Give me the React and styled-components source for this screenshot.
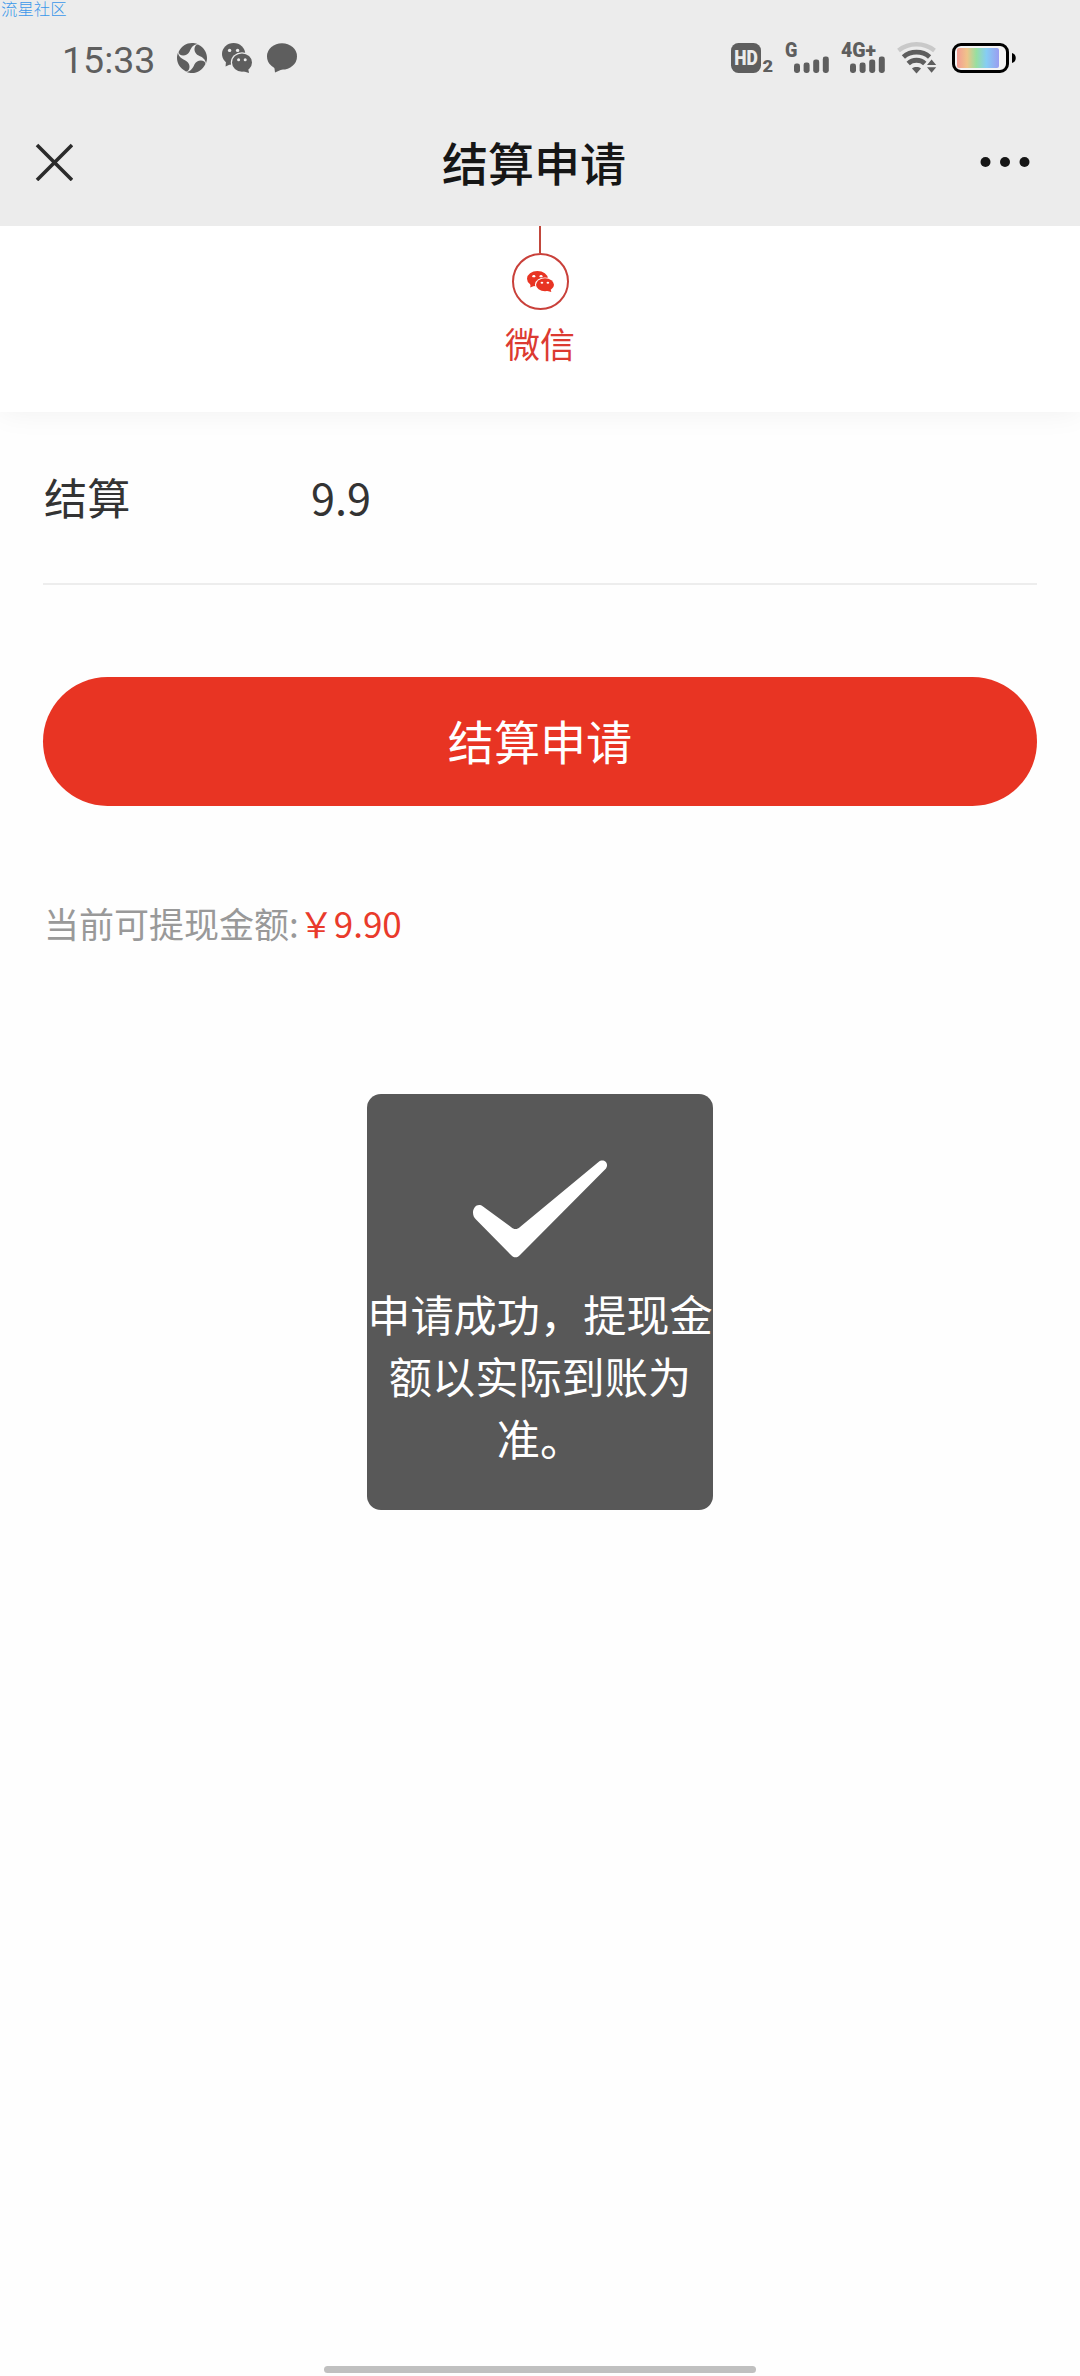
import React from "react";
import styled, { createGlobalStyle } from "styled-components";

const GlobalStyle = createGlobalStyle`
  * {
    box-sizing: border-box;
  }

  body {
    margin: 0;
    background: #fefefe;
    font-family: "Noto Sans CJK SC", "Noto Sans", sans-serif;
  }
`;

const Page = styled.div`
  display: flex;
  flex-direction: column;
  width: 1080px;
  height: 2376px;
  overflow: hidden;
`;

const Header = styled.header`
  display: flex;
  flex-direction: column;
  height: 226px;
  background: #ececec;
`;

const Watermark = styled.span`
  height: 16px;
  padding-left: 1px;
  color: #3a97ea;
  font-family: "Liberation Sans", "Noto Sans CJK SC", sans-serif;
  font-size: 16.4px;
  font-weight: 300;
  line-height: 18px;
`;

const StatusBar = styled.div`
  display: flex;
  align-items: center;
  justify-content: space-between;
  height: 84px;
  padding: 0 64px 0 62px;
`;

const StatusGroup = styled.div`
  display: flex;
  align-items: center;
  gap: ${(props) => props.$gap}px;
`;

const Clock = styled.span`
  width: 100px;
  padding-top: 4px;
  color: #5e5e5e;
  font-family: Roboto, sans-serif;
  font-size: 37.5px;
  line-height: 40px;
`;

const NavBar = styled.nav`
  display: grid;
  grid-template-columns: 200px 1fr 200px;
  align-items: center;
  height: 123px;
  padding: 0 50px 0 35px;
`;

const Title = styled.h1`
  margin: 0;
  padding: 0 0 2px 3px;
  color: #161616;
  font-size: 46px;
  font-weight: 500;
  line-height: 66px;
  text-align: center;
`;

const NavButton = styled.button`
  display: flex;
  justify-content: ${(props) => (props.$end ? "flex-end" : "flex-start")};
  padding: 0;
  border: 0;
  background: none;
`;

const Method = styled.section`
  display: flex;
  flex-direction: column;
  align-items: center;
  height: 186px;
  background: #fff;
  box-shadow: 0 0 29px rgba(0, 0, 0, 0.06);
  clip-path: inset(0 0 -60px 0);
`;

const Connector = styled.div`
  width: 2px;
  height: 27px;
  background: #c1473c;
`;

const MethodIcon = styled.div`
  display: flex;
  align-items: center;
  justify-content: center;
  width: 57px;
  height: 57px;
  border: 2px solid #c9403a;
  border-radius: 50%;
`;

const MethodName = styled.span`
  margin-top: 8px;
  color: #dc3a31;
  font-size: 35px;
  line-height: 50px;
`;

const Form = styled.main`
  display: flex;
  flex: 1;
  flex-direction: column;
  padding: 0 43px;
`;

const Field = styled.div`
  display: flex;
  align-items: center;
  height: 173px;
  padding: 0 0 4px 1px;
  border-bottom: 2px solid #ededed;
  color: #333;
  font-size: 43.2px;
  line-height: 62px;
`;

const FieldLabel = styled.label`
  width: 267px;
`;

const Submit = styled.button`
  height: 129px;
  margin-top: 92px;
  padding: 0 0 3px;
  border: 0;
  border-radius: 65px;
  background: #e83423;
  color: #fff;
  font-family: inherit;
  font-size: 46.08px;
  line-height: 66px;
`;

const Balance = styled.p`
  margin: 92px 0 0;
  padding-left: 1px;
  color: #999;
  font-size: 35px;
  line-height: 50px;
`;

const Amount = styled.span`
  color: #e93a2b;
`;

const Toast = styled.div`
  position: absolute;
  top: 1094px;
  left: 367px;
  display: flex;
  flex-direction: column;
  align-items: center;
  width: 346px;
  height: 416px;
  padding-top: 65px;
  border-radius: 14px;
  background: #585858;
`;

const ToastText = styled.p`
  width: 346px;
  margin: 23px 0 0;
  color: #fff;
  font-size: 43.2px;
  line-height: 62.2px;
  text-align: center;
`;

const HomeIndicator = styled.div`
  align-self: center;
  width: 432px;
  height: 7px;
  margin-bottom: 3px;
  border-radius: 4px;
  background: #c0c0c0;
`;

const IconText = styled.text`
  font-family: Roboto, sans-serif;
  font-weight: 900;
`;

const WechatIcon = ({ width, height, color, background }) => (
  <svg width={width} height={height} viewBox="0 0 30 30" preserveAspectRatio="none">
    <g fill={color}>
      <ellipse cx="11.6" cy="11" rx="11.6" ry="11" />
      <path d="M4 18 L3.6 23.6 L10 20.5 Z" />
    </g>
    <ellipse cx="20" cy="19.6" rx="11.2" ry="10.4" fill={background} />
    <g fill={color}>
      <ellipse cx="20" cy="19.6" rx="10" ry="9.2" />
      <path d="M20.5 28 L27 30 L26 25 Z" />
    </g>
    <g fill={background}>
      <circle cx="7.6" cy="7.4" r="1.7" />
      <circle cx="15.6" cy="7.4" r="1.7" />
      <circle cx="16.6" cy="16.7" r="1.5" />
      <circle cx="23.2" cy="16.7" r="1.5" />
    </g>
  </svg>
);

const BLADE =
  "M1.8 8.6 C4.4 3.4 9.4 0 15 0 C17 0 18.8 0.4 20.2 1 C16 1.8 14.4 4.6 12.6 8.4 C10.6 12.6 5.6 13.6 2.8 11.4 C1.6 10.4 1.4 9.4 1.8 8.6 Z";

const PinwheelIcon = () => (
  <svg width="30" height="30" viewBox="0 0 30 30" fill="#5e5e5e">
    {[0, 90, 180, 270].map((angle) => (
      <path key={angle} d={BLADE} transform={`rotate(${angle} 15 15)`} />
    ))}
  </svg>
);

const ChatIcon = () => (
  <svg width="30" height="30" viewBox="0 0 30 30" fill="#5e5e5e">
    <ellipse cx="15" cy="13.4" rx="15" ry="13.2" />
    <path d="M7 22 L8 29.6 L17 25.5 Z" />
  </svg>
);

const HdIcon = () => (
  <svg width="42" height="36" viewBox="0 0 42 36">
    <rect x="0" y="3" width="30" height="30" rx="7.5" fill="#5e5e5e" />
    <IconText x="3.2" y="25.3" fontSize="20.4" fill="#ececec" textLength="23.6" lengthAdjust="spacingAndGlyphs">
      HD
    </IconText>
    <IconText x="31.6" y="32.3" fontSize="17.3" fill="#5e5e5e" textLength="10.6" lengthAdjust="spacingAndGlyphs">
      2
    </IconText>
  </svg>
);

const BARS = [9.5, 10.5, 13.6, 16.5];

const SignalIcon = ({ label, labelWidth }) => (
  <svg width="44" height="36" viewBox="0 0 44 36" fill="#5e5e5e">
    <IconText x="0" y="17.3" fontSize="19.6" textLength={labelWidth} lengthAdjust="spacingAndGlyphs">
      {label}
    </IconText>
    {BARS.map((height, index) => (
      <rect key={index} x={9 + index * 9.6} y={33 - height} width="6" height={height} rx="2.4" />
    ))}
  </svg>
);

const WifiIcon = () => (
  <svg width="41" height="36" viewBox="0 0 41 36" fill="none">
    <path d="M1.5 10.5 C12 2.2 27 2.2 37.5 10.5" stroke="#c9c9c9" strokeWidth="4.4" />
    <path d="M6.4 17 C13.6 10.6 25.4 10.6 32.6 17" stroke="#5e5e5e" strokeWidth="4.8" />
    <path d="M11.2 23.4 C15.6 19.2 23.4 19.2 27.8 23.4" stroke="#5e5e5e" strokeWidth="4.8" />
    <path d="M15 28.4 C17.4 26.6 21.6 26.6 24 28.4 L19.5 33.4 Z" fill="#5e5e5e" />
    <path d="M30 25 L34.6 19.4 L39.2 25 Z M30 27.2 L34.6 32.8 L39.2 27.2 Z" fill="#5e5e5e" />
  </svg>
);

const BatteryIcon = () => (
  <svg width="66" height="36" viewBox="0 0 66 36">
    <defs>
      <linearGradient id="charge">
        <stop offset="0" stopColor="#f39c94" />
        <stop offset="0.24" stopColor="#f0c48a" />
        <stop offset="0.46" stopColor="#97dfa0" />
        <stop offset="0.7" stopColor="#86cdf4" />
        <stop offset="1" stopColor="#9a9df0" />
      </linearGradient>
    </defs>
    <rect x="3.5" y="4.5" width="54" height="27" rx="7.5" fill="#f4f4f4" stroke="#000" strokeWidth="3" />
    <rect x="7" y="8" width="42" height="20" rx="2" fill="url(#charge)" />
    <path d="M62 13 C67 14 67 22 62 23 Z" fill="#000" />
  </svg>
);

const CloseIcon = () => (
  <svg width="38" height="38" viewBox="0 0 38 38" stroke="#2b2b2b" strokeWidth="3.6">
    <path d="M2 2 L37 37 M37 2 L2 37" />
  </svg>
);

const MoreIcon = () => (
  <svg width="50" height="12" viewBox="0 0 50 12" fill="#161616">
    <circle cx="5.5" cy="6" r="5" />
    <circle cx="25" cy="6" r="5" />
    <circle cx="44.5" cy="6" r="5" />
  </svg>
);

const CheckIcon = () => (
  <svg width="136" height="100" viewBox="0 0 136 100" fill="#fff">
    <path d="M1 53.5 C1 48 6 43.5 11 47.5 L39 68 C42 70.8 45 70.8 48 68 L126.5 3 C131.5 -1 137.5 4 134 9.5 L48.5 95.5 C45 99.3 42 99.3 38.5 95.5 L4 60.5 C2 58.5 1 56.5 1 53.5 Z" />
  </svg>
);

export const App = () => {
  return (
    <Page>
      <GlobalStyle />
      <Header>
        <Watermark>流星社区</Watermark>
        <StatusBar>
          <StatusGroup $gap={15}>
            <Clock>15:33</Clock>
            <PinwheelIcon />
            <WechatIcon width={30} height={30} color="#5e5e5e" background="#ececec" />
            <ChatIcon />
          </StatusGroup>
          <StatusGroup $gap={12}>
            <HdIcon />
            <SignalIcon label="G" labelWidth={12.4} />
            <SignalIcon label="4G+" labelWidth={35} />
            <WifiIcon />
            <BatteryIcon />
          </StatusGroup>
        </StatusBar>
        <NavBar>
          <NavButton aria-label="关闭">
            <CloseIcon />
          </NavButton>
          <Title>结算申请</Title>
          <NavButton $end aria-label="更多">
            <MoreIcon />
          </NavButton>
        </NavBar>
      </Header>
      <Method>
        <Connector />
        <MethodIcon>
          <WechatIcon width={27} height={21} color="#e83423" background="#fff" />
        </MethodIcon>
        <MethodName>微信</MethodName>
      </Method>
      <Form>
        <Field>
          <FieldLabel>结算</FieldLabel>
          <span>9.9</span>
        </Field>
        <Submit>结算申请</Submit>
        <Balance>
          当前可提现金额:<Amount>￥9.90</Amount>
        </Balance>
      </Form>
      <HomeIndicator />
      <Toast>
        <CheckIcon />
        <ToastText>申请成功，提现金额以实际到账为准。</ToastText>
      </Toast>
    </Page>
  );
};

export default App;
